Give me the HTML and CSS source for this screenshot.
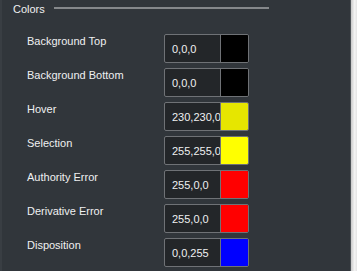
FILE: index.html
```html
<!DOCTYPE html>
<html lang="en">
  <head>
    <meta charset="UTF-8" />
    <title>Colors</title>
    <link rel="stylesheet" href="styles.css">
  </head>

  <body>
    <div class="window">
      <div class="edge-left"></div>

      <div class="panel">
        <!-- group header -->
        <div class="group-title">
          <span class="title-text">Colors</span>
          <span class="title-line"></span>
        </div>

        <!-- color rows -->
        <div class="rows">
          <div class="row">
            <span class="label">Background Top</span>
            <div class="field">
              <span class="value">0,0,0</span>
              <span class="swatch sw-black"></span>
            </div>
          </div>
          <div class="row">
            <span class="label">Background Bottom</span>
            <div class="field">
              <span class="value">0,0,0</span>
              <span class="swatch sw-black"></span>
            </div>
          </div>
          <div class="row">
            <span class="label">Hover</span>
            <div class="field">
              <span class="value">230,230,0</span>
              <span class="swatch sw-hover"></span>
            </div>
          </div>
          <div class="row">
            <span class="label">Selection</span>
            <div class="field">
              <span class="value">255,255,0</span>
              <span class="swatch sw-yellow"></span>
            </div>
          </div>
          <div class="row">
            <span class="label">Authority Error</span>
            <div class="field">
              <span class="value">255,0,0</span>
              <span class="swatch sw-red"></span>
            </div>
          </div>
          <div class="row">
            <span class="label">Derivative Error</span>
            <div class="field">
              <span class="value">255,0,0</span>
              <span class="swatch sw-red"></span>
            </div>
          </div>
          <div class="row">
            <span class="label">Disposition</span>
            <div class="field">
              <span class="value">0,0,255</span>
              <span class="swatch sw-blue"></span>
            </div>
          </div>
        </div>
      </div>

      <div class="divider"></div>
      <div class="scroll-strip"></div>
    </div>
  </body>
</html>
```

FILE: styles.css
```css
*,
*::after,
*::before {
  padding: 0;
  margin: 0;
  box-sizing: border-box;
}
:root {
  --bg: #31363b;
  --text: #eff0f1;
  --border: #6f7276;
}
html,
body {
  width: 100%;
  height: 100%;
  background: var(--bg);
}
body {
  font-family: "Liberation Sans", Arial, sans-serif;
  font-size: 11px;
  line-height: 14px;
  color: var(--text);
  overflow: hidden;
}
.window {
  display: flex;
  height: 271px;
}
.edge-left {
  width: 2px;
  background: #393e43;
}
.panel {
  width: 348px;
  padding: 2px 0 0 11px;
}
.divider {
  width: 1px;
  background: #4d5257;
}
.scroll-strip {
  flex: 1;
  background: linear-gradient(to right, #c9c9c9, #f4f4f4 60%, #e4e4e4);
}

/* group header */
.group-title {
  display: flex;
  align-items: flex-start;
  height: 14px;
}
.title-line {
  width: 215px;
  height: 2px;
  margin: 5px 0 0 9px;
  background: #85888b;
}

/* rows */
.rows {
  display: flex;
  flex-direction: column;
  gap: 5px;
  margin-top: 18px;
  padding-left: 14px;
}
.row {
  display: flex;
  align-items: flex-start;
}
.label {
  width: 137px;
}
.field {
  display: flex;
  width: 85px;
  height: 29px;
  border: 1px solid var(--border);
  border-radius: 2px;
  background: #232629;
  overflow: hidden;
}
.value {
  flex: 1;
  display: flex;
  align-items: center;
  padding: 1px 0 0 7px;
  white-space: nowrap;
  overflow: hidden;
}
.swatch {
  width: 28px;
  border-left: 1px solid var(--border);
}
.sw-black {
  background: #000;
}
.sw-hover {
  background: #e6e600;
}
.sw-yellow {
  background: #ffff00;
}
.sw-red {
  background: #ff0000;
}
.sw-blue {
  background: #0000ff;
}
```
